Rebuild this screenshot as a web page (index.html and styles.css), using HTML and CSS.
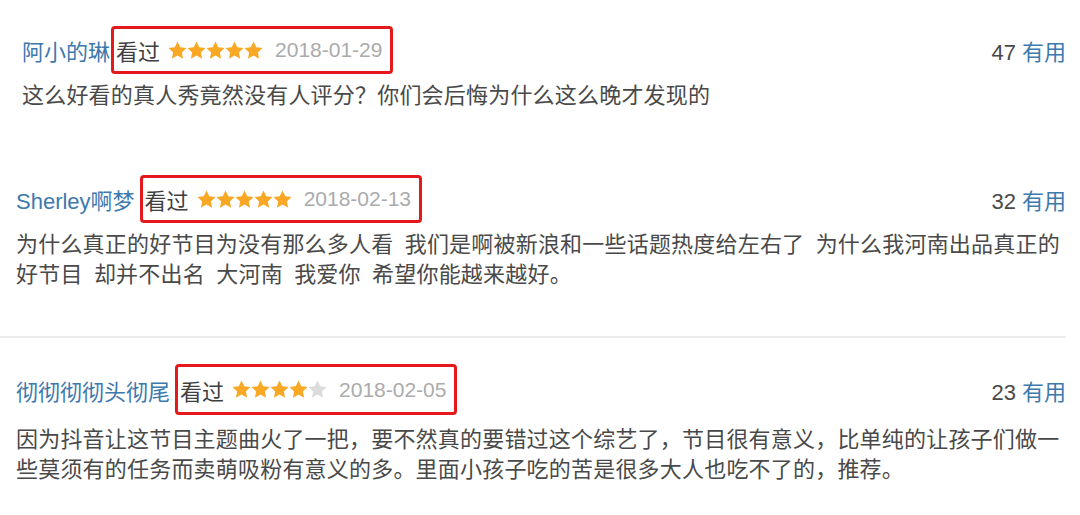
FILE: index.html
```html
<!DOCTYPE html>
<html lang="zh-CN">
    <head>
        <meta charset="UTF-8">
        <meta name="viewport" content="width=device-width, initial-scale=1.0">
        <title>短评</title>
        <link rel="stylesheet" href="styles.css">
    </head>
    <body>
        <svg class="defs" aria-hidden="true">
            <symbol id="star" viewBox="2 2 20 20">
                <path d="M12 2.5l2.9 6.1 6.6.8-4.9 4.6 1.3 6.6L12 17.3l-5.9 3.3 1.3-6.6-4.9-4.6 6.6-.8z"/>
            </symbol>
        </svg>
        <div class="reviews">
            <div class="review first">
                <div class="review-head">
                    <div class="info">
                        <a class="name">阿小的琳</a>
                        <span class="mark">
                            <span class="seen">看过</span>
                            <span class="stars">
                                <svg class="star"><use href="#star"/></svg><svg class="star"><use href="#star"/></svg><svg class="star"><use href="#star"/></svg><svg class="star"><use href="#star"/></svg><svg class="star"><use href="#star"/></svg>
                            </span>
                            <span class="date">2018-01-29</span>
                        </span>
                    </div>
                    <div class="votes">47 <a>有用</a></div>
                </div>
                <p class="comment">这么好看的真人秀竟然没有人评分？你们会后悔为什么这么晚才发现的</p>
            </div>
            <div class="review second">
                <div class="review-head">
                    <div class="info">
                        <a class="name">Sherley啊梦</a>
                        <span class="mark">
                            <span class="seen">看过</span>
                            <span class="stars">
                                <svg class="star"><use href="#star"/></svg><svg class="star"><use href="#star"/></svg><svg class="star"><use href="#star"/></svg><svg class="star"><use href="#star"/></svg><svg class="star"><use href="#star"/></svg>
                            </span>
                            <span class="date">2018-02-13</span>
                        </span>
                    </div>
                    <div class="votes">32 <a>有用</a></div>
                </div>
                <p class="comment">为什么真正的好节目为没有那么多人看 我们是啊被新浪和一些话题热度给左右了 为什么我河南出品真正的好节目 却并不出名 大河南 我爱你 希望你能越来越好。</p>
            </div>
            <div class="review third">
                <div class="review-head">
                    <div class="info">
                        <a class="name">彻彻彻彻头彻尾</a>
                        <span class="mark">
                            <span class="seen">看过</span>
                            <span class="stars">
                                <svg class="star"><use href="#star"/></svg><svg class="star"><use href="#star"/></svg><svg class="star"><use href="#star"/></svg><svg class="star"><use href="#star"/></svg><svg class="star off"><use href="#star"/></svg>
                            </span>
                            <span class="date">2018-02-05</span>
                        </span>
                    </div>
                    <div class="votes">23 <a>有用</a></div>
                </div>
                <p class="comment">因为抖音让这节目主题曲火了一把，要不然真的要错过这个综艺了，节目很有意义，比单纯的让孩子们做一些莫须有的任务而卖萌吸粉有意义的多。里面小孩子吃的苦是很多大人也吃不了的，推荐。</p>
            </div>
        </div>
    </body>
</html>
```

FILE: styles.css
```css
* { box-sizing: border-box; }
html, body { height: 100%; }
body {
    margin: 0;
    background-color: #ffffff;
    color: #494949;
    font-family: "Liberation Sans", "Noto Sans CJK SC", sans-serif;
    font-size: 22px;
    overflow: hidden;
}
.defs { display: none; }
.reviews {
    width: 1066px;
}
.review {
    padding: 26px 0 38px 16px;
}
.review.first { padding-left: 22px; }
.review.second {
    padding-bottom: 46px;
    border-bottom: 2px solid #ececec;
}
.review.third { padding-top: 26px; }
.review-head {
    display: flex;
    justify-content: space-between;
    align-items: center;
    height: 48px;
}
.third .review-head { height: 51px; }
.info {
    display: flex;
    align-items: center;
}
.name, .votes a {
    color: #3d79ad;
    text-decoration: none;
}
.mark {
    display: flex;
    align-items: center;
    height: 48px;
    border: 3px solid #e5191c;
    border-radius: 4px;
    padding: 0 8px 0 2px;
    margin-left: 5px;
}
.first .mark { margin-left: 1px; }
.third .mark { height: 51px; }
.seen { color: #3f3f3f; }
.stars {
    display: flex;
    margin: 0 12px 0 8px;
}
.star {
    width: 19px;
    height: 19px;
    fill: #f9a825;
}
.star.off { fill: #dcdcdc; }
.date {
    color: #ababab;
    font-size: 21px;
}
.votes {
    color: #494949;
}
.comment {
    margin: 7px 0 0;
    line-height: 30px;
    letter-spacing: 0.2px;
    word-spacing: 5px;
}
.third .comment { margin-top: 10px; }
```
